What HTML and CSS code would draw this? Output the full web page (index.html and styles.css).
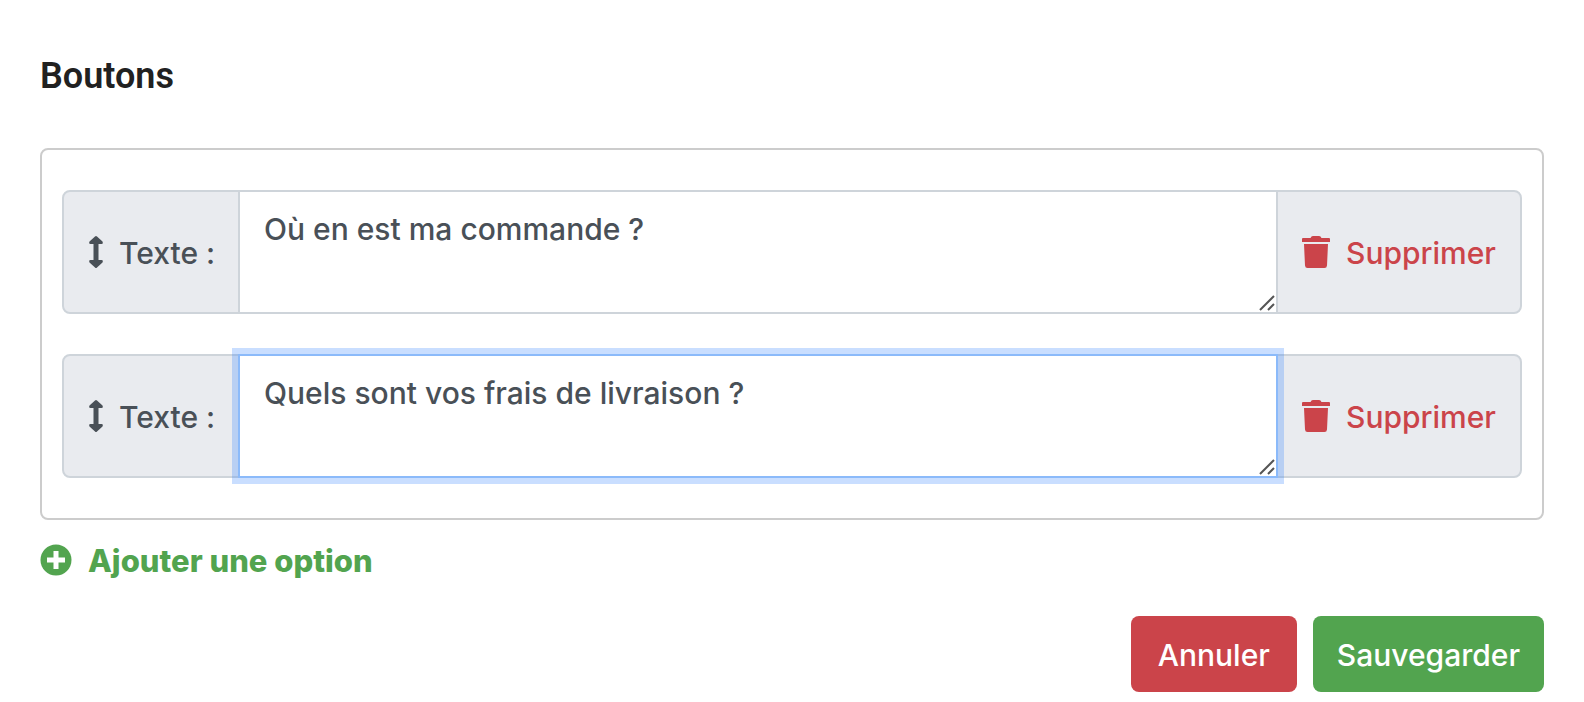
FILE: index.html
```
<!DOCTYPE html>
<html lang="fr">
<head>
  <meta charset="UTF-8">
  <meta name="viewport" content="width=device-width, initial-scale=1">
  <title>Boutons</title>
  <link rel="stylesheet" href="styles.css">
</head>
<body>

  <h1>Boutons</h1>

  <form id="buttonsForm">
    <div class="options">
      <div class="option">
        <label class="addon addon-label" for="option1">
          <svg class="icon-move" viewBox="0 0 14 32" aria-hidden="true">
            <path d="M6 .6Q7-.4 8 .6L13.5 5.500Q14.500 8 12.500 8H9.500V24H12.500Q14.500 24 13.500 26.500L8 31.400Q7 32.400 6 31.400L.5 26.500Q-.5 24 1.500 24H4.500V8H1.500Q-.5 8 .5 5.500Z"/>
          </svg>
          <span>Texte :</span>
        </label>
        <div class="field">
          <textarea id="option1">Où en est ma commande ?</textarea>
          <svg class="grip" viewBox="0 0 16 16" aria-hidden="true"><path d="M1 15L15 1M9 15L15 9"/></svg>
        </div>
        <button type="button" class="addon addon-delete">
          <svg class="icon-trash" viewBox="0 0 28 32" aria-hidden="true">
            <path d="M1 2H8.500L9.500 .5Q10 0 11 0H17Q18 0 18.500 .5L19.500 2H27Q28 2 28 3V6H0V3Q0 2 1 2ZM2 8H26L25 29.500Q24.800 32 22.500 32H5.500Q3.200 32 3 29.500Z"/>
          </svg>
          <span>Supprimer</span>
        </button>
      </div>

      <div class="option">
        <label class="addon addon-label" for="option2">
          <svg class="icon-move" viewBox="0 0 14 32" aria-hidden="true">
            <path d="M6 .6Q7-.4 8 .6L13.5 5.500Q14.500 8 12.500 8H9.500V24H12.500Q14.500 24 13.500 26.500L8 31.400Q7 32.400 6 31.400L.5 26.500Q-.5 24 1.500 24H4.500V8H1.500Q-.5 8 .5 5.500Z"/>
          </svg>
          <span>Texte :</span>
        </label>
        <div class="field">
          <textarea id="option2" class="active">Quels sont vos frais de livraison ?</textarea>
          <svg class="grip" viewBox="0 0 16 16" aria-hidden="true"><path d="M1 15L15 1M9 15L15 9"/></svg>
        </div>
        <button type="button" class="addon addon-delete">
          <svg class="icon-trash" viewBox="0 0 28 32" aria-hidden="true">
            <path d="M1 2H8.500L9.500 .5Q10 0 11 0H17Q18 0 18.500 .5L19.500 2H27Q28 2 28 3V6H0V3Q0 2 1 2ZM2 8H26L25 29.500Q24.800 32 22.500 32H5.500Q3.200 32 3 29.500Z"/>
          </svg>
          <span>Supprimer</span>
        </button>
      </div>
    </div>

    <button type="button" class="add">
      <svg class="icon-plus" viewBox="0 0 32 32" aria-hidden="true">
        <circle cx="16" cy="16" r="15.500"/>
        <path d="M13.500 7H18.500V13.500H25V18.500H18.500V25H13.500V18.500H7V13.500H13.500Z"/>
      </svg>
      <span>Ajouter une option</span>
    </button>

    <div class="actions">
      <button type="button" class="btn btn-cancel">Annuler</button>
      <button type="submit" class="btn btn-save">Sauvegarder</button>
    </div>
  </form>

</body>
</html>
```
FILE: styles.css
```
* {
  box-sizing: border-box;
}

body {
  font-family: Inter, 'Liberation Sans', sans-serif;
  font-size: 30px;
  font-weight: 500;
  line-height: 48px;
  color: #495057;
  background-color: #fff;
  margin: 0;
  padding: 52px 40px 10px;
}

h1 {
  font-family: Roboto, sans-serif;
  font-size: 36px;
  font-weight: 600;
  line-height: 48px;
  color: #212121;
  margin: 0 0 48px;
}

button, textarea {
  font: inherit;
  margin: 0;
}

button {
  cursor: pointer;
}

svg {
  flex: none;
  fill: currentColor;
}

.options {
  display: flex;
  flex-direction: column;
  gap: 40px;
  padding: 40px 20px;
  border: 2px solid #ccc;
  border-radius: 8px;
}

.option {
  display: flex;
}

.addon {
  display: flex;
  align-items: center;
  flex: none;
  gap: 16px;
  padding: 0 24px;
  background-color: #e9ebef;
  border: 2px solid #ced4da;
  white-space: nowrap;
}

.addon span, .add span {
  padding-top: 2px;
}

.addon-label {
  width: 178px;
  padding-left: 25px;
  border-radius: 8px 0 0 8px;
}

.addon-delete {
  width: 246px;
  margin-left: -2px;
  color: #cb444a;
  border-radius: 0 8px 8px 0;
}

.field {
  position: relative;
  z-index: 1;
  display: flex;
  flex: 1;
  min-width: 0;
  margin-left: -2px;
}

textarea {
  display: block;
  width: 100%;
  height: 124px;
  padding: 13px 24px;
  color: #495057;
  background-color: #fff;
  border: 2px solid #ced4da;
  border-radius: 0;
  outline: none;
  resize: vertical;
}

textarea::-webkit-resizer {
  display: none;
}

textarea:focus, textarea.active {
  border-color: #8bbafa;
  box-shadow: 0 0 0 6px rgba(39,123,255,0.25);
}

.grip {
  position: absolute;
  right: 3px;
  bottom: 3px;
  width: 16px;
  height: 16px;
  fill: none;
  stroke: #555;
  stroke-width: 2;
  pointer-events: none;
}

.icon-move {
  width: 14px;
  height: 32px;
}

.icon-trash {
  width: 28px;
  height: 32px;
}

.icon-plus {
  width: 32px;
  height: 32px;
}

.icon-plus path {
  fill: #fff;
}

.add {
  display: flex;
  align-items: center;
  gap: 16px;
  margin-top: 15px;
  padding: 0;
  font-size: 31px;
  font-weight: 800;
  color: #52a44f;
  background: none;
  border: none;
}

.actions {
  display: flex;
  justify-content: flex-end;
  gap: 16px;
  margin-top: 31px;
}

.btn {
  min-width: 166px;
  padding: 15px 24px 13px;
  color: #fff;
  border: none;
  border-radius: 8px;
}

.btn-cancel {
  background-color: #cb444a;
}

.btn-save {
  background-color: #52a44f;
}
```
